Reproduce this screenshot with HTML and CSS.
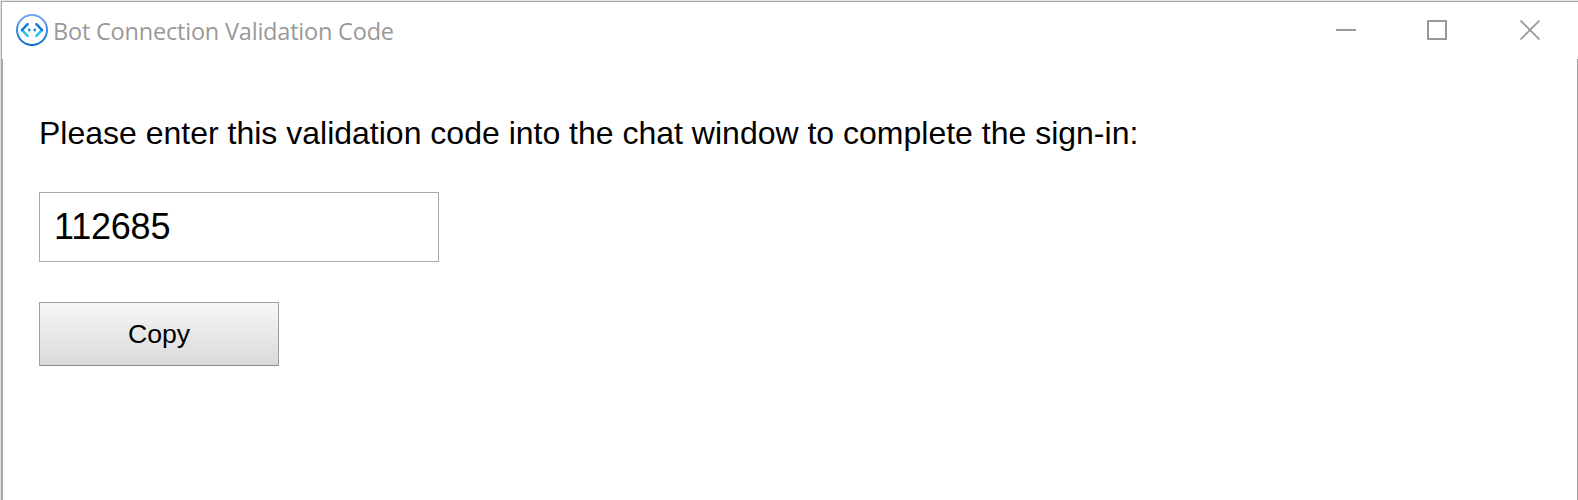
FILE: index.html
```
<!DOCTYPE html>
<html lang="en">
<head>
<meta charset="utf-8">
<title>Bot Connection Validation Code</title>
<link rel="stylesheet" href="styles.css">
</head>
<body>
<div class="window">
  <header class="titlebar">
    <svg class="logo" width="32" height="32" viewBox="0 0 32 32" fill="none">
      <defs>
        <linearGradient id="ring" x1="0" y1="0" x2="0" y2="1"><stop offset="0" stop-color="#6ba6f2"/><stop offset="1" stop-color="#0a6fd2"/></linearGradient>
      </defs>
      <circle cx="16" cy="16" r="15" stroke="url(#ring)" stroke-width="2"/>
      <path d="M6 16 11.6 21.8" stroke="#22c3ee" stroke-width="2.5" stroke-linecap="round"/>
      <path d="M11.6 10.2 6 16" stroke="#0f7ad8" stroke-width="2.5" stroke-linecap="round"/>
      <path d="M26 16 20.4 21.8" stroke="#22c3ee" stroke-width="2.5" stroke-linecap="round"/>
      <path d="M20.4 10.2 26 16" stroke="#0f7ad8" stroke-width="2.5" stroke-linecap="round"/>
      <circle cx="13.2" cy="16" r="1.4" fill="#1689e0"/>
      <circle cx="18.8" cy="16" r="1.4" fill="#1689e0"/>
    </svg>
    <span class="title">Bot Connection Validation Code</span>
    <div class="controls">
      <svg width="20" height="20"><path d="M0 10H20" stroke="#999" stroke-width="2"/></svg>
      <svg width="20" height="20"><rect x="1" y="1" width="18" height="18" fill="none" stroke="#999" stroke-width="2"/></svg>
      <svg class="close" width="20" height="20"><path d="M.5 .5 19.5 19.5M19.5 .5 .5 19.5" stroke="#999" stroke-width="1.8"/></svg>
    </div>
  </header>
  <main class="content">
    <p class="message">Please enter this validation code into the chat window to complete the sign-in:</p>
    <input class="code" type="text" value="112685">
    <button class="copy" type="button">Copy</button>
  </main>
</div>
</body>
</html>
```
FILE: styles.css
```
* { box-sizing: border-box; }
body { margin: 0; font-family: "Liberation Sans", Arial, sans-serif; color: #000; }
.window {
  height: 500px;
  overflow: hidden;
  background: #fff;
  border-top: 1px solid #e4e4e4;
  border-left: 1px solid #e0e0e0;
  display: flex;
  flex-direction: column;
}
.titlebar {
  height: 58px;
  flex: none;
  display: flex;
  align-items: flex-start;
  border-top: 1px solid #a5a5a5;
  border-left: 1px solid #a9a9a9;
  padding: 12px 38px 0 14px;
}
.logo { flex: none; }
.title {
  margin-left: 5px;
  font: 23.5px/34px "Open Sans", "Noto Sans", sans-serif;
  letter-spacing: -0.2px;
  color: #999;
  white-space: nowrap;
}
.controls { display: flex; gap: 71px; margin: 6px 0 0 auto; }
.close { margin-left: 2px; }
.content {
  flex: 1;
  display: flex;
  flex-direction: column;
  align-items: flex-start;
  border-left: 2px solid #a9a9a9;
  border-right: 1px solid #a0a0a0;
  padding: 56px 36px 0;
}
.message { margin: 0; font-size: 32px; line-height: 37px; white-space: nowrap; }
.code {
  width: 400px;
  height: 70px;
  margin: 40px 0 0;
  padding: 0 14px;
  border: 1px solid #a9a9a9;
  font: 36px "Liberation Sans", Arial, sans-serif;
  letter-spacing: -0.2px;
  color: #000;
  background: #fff;
}
.copy {
  width: 240px;
  height: 64px;
  margin: 40px 0 0;
  padding: 0;
  border: 1px solid #a0a0a0;
  border-bottom-color: #8e8e8e;
  border-radius: 1px;
  background: linear-gradient(#f7f7f7, #e8e8e8 50%, #dadada);
  font: 26.67px "Liberation Sans", Arial, sans-serif;
  color: #000;
}
```
